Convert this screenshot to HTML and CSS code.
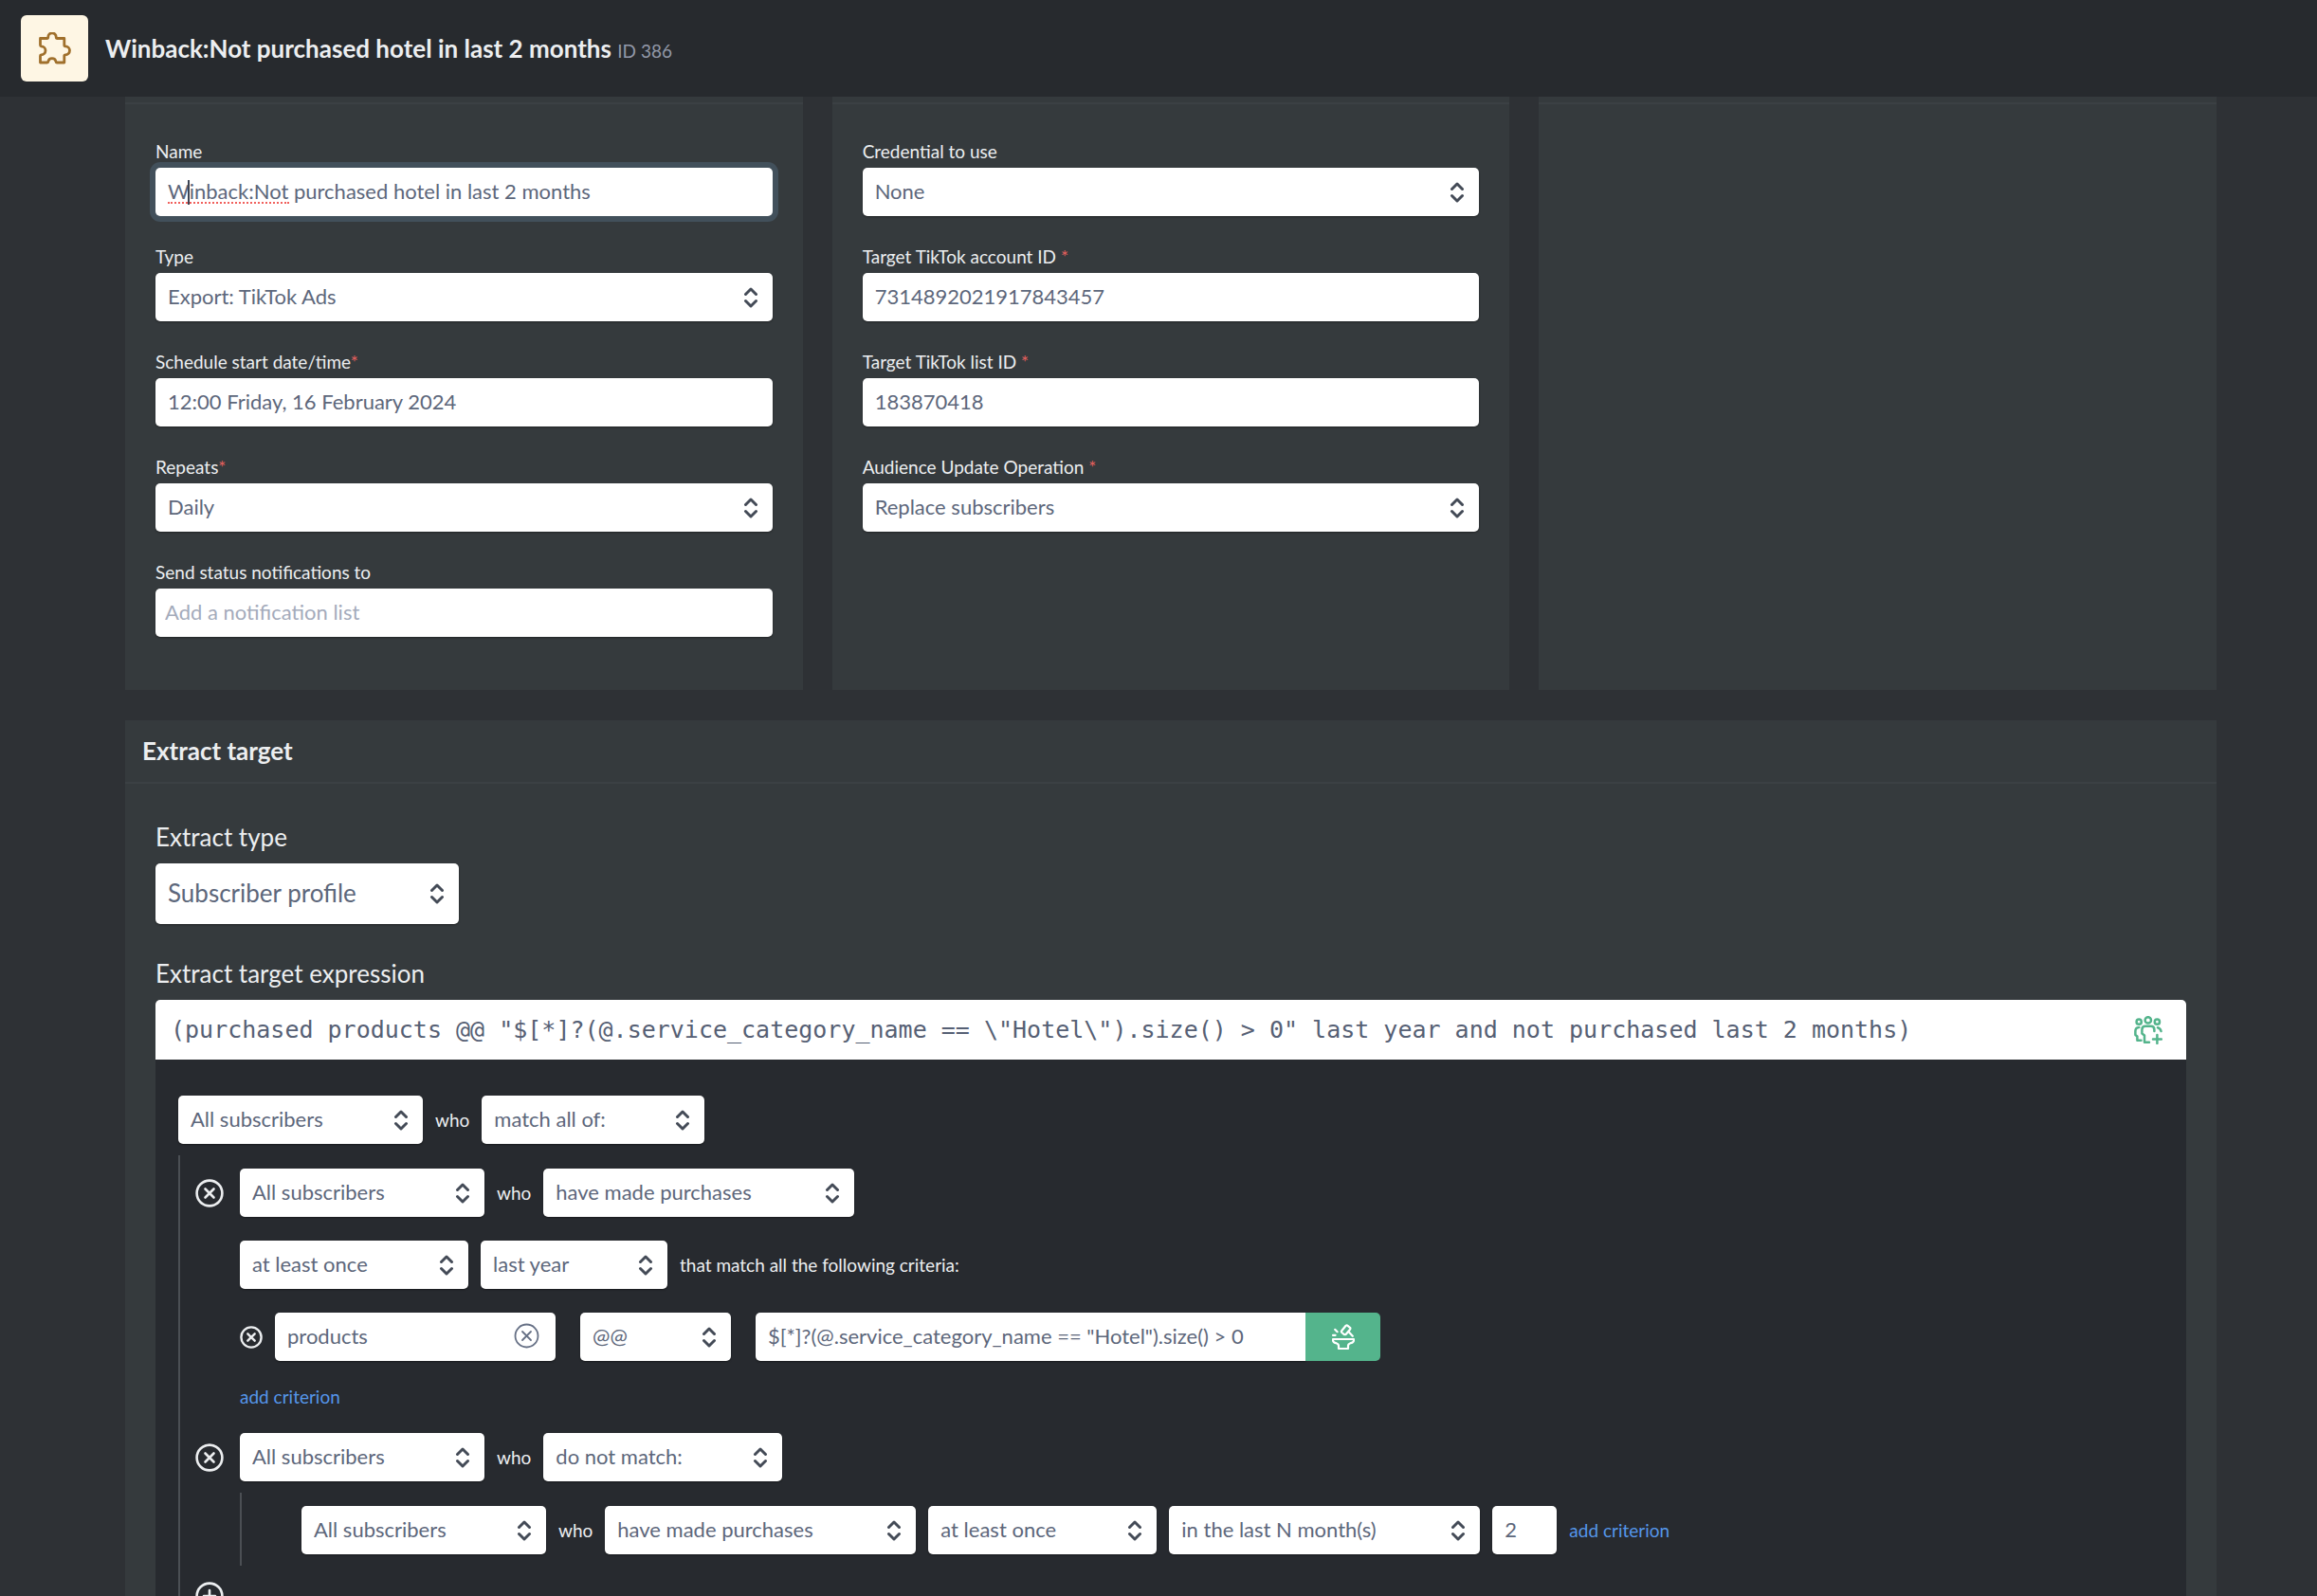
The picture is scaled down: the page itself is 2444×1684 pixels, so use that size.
FILE: index.html
```
<!DOCTYPE html>
<html lang="en">
<head>
    <meta charset="UTF-8">
    <meta name="viewport" content="width=device-width, initial-scale=1.0">
    <title>Winback:Not purchased hotel in last 2 months</title>
    <link rel="stylesheet" href="styles.css">
</head>
<body>
    <header class="topbar">
        <div class="topbar-icon">
            <svg width="34" height="34" viewBox="0 0 34 34" fill="none" stroke="#a0702c" stroke-width="2.8" stroke-linejoin="round">
                <path d="M1.5 6.5H8.5Q9.8 6.5 9.8 5a4.2 4.2 0 0 1 8.4 0Q18.2 6.5 19.5 6.5H26.8V13.5Q26.8 14.8 28 14.8a4.5 4.5 0 0 1 0 9Q26.8 23.8 26.8 25V32H19Q18 32 18 31a4.2 4.2 0 0 0-8.2 0Q9.8 32 8.8 32H1.5V25Q1.5 24 2.5 23.8a4.5 4.5 0 0 0 0-9Q1.5 14.6 1.5 13.5Z"/>
            </svg>
        </div>
        <h1>Winback:Not purchased hotel in last 2 months <small>ID 386</small></h1>
    </header>

    <main>
        <form class="content">
            <div class="cards">
                <section class="card">
                    <div class="card-edge"></div>
                    <div class="card-body">
                        <div class="field">
                            <label for="name">Name</label>
                            <div class="editing">
                                <input type="text" id="name" class="control focused" value="Winback:Not purchased hotel in last 2 months">
                                <span class="misspelt"></span>
                                <span class="caret"></span>
                            </div>
                        </div>
                        <div class="field">
                            <label for="type">Type</label>
                            <select id="type" class="control"><option>Export: TikTok Ads</option></select>
                        </div>
                        <div class="field">
                            <label for="start">Schedule start date/time<span class="required">*</span></label>
                            <input type="text" id="start" class="control" value="12:00 Friday, 16 February 2024">
                        </div>
                        <div class="field">
                            <label for="repeats">Repeats<span class="required">*</span></label>
                            <select id="repeats" class="control"><option>Daily</option></select>
                        </div>
                        <div class="field">
                            <label for="notify">Send status notifications to</label>
                            <input type="text" id="notify" class="control tags" placeholder="Add a notification list">
                        </div>
                    </div>
                </section>

                <section class="card">
                    <div class="card-edge"></div>
                    <div class="card-body">
                        <div class="field">
                            <label for="credential">Credential to use</label>
                            <select id="credential" class="control"><option>None</option></select>
                        </div>
                        <div class="field">
                            <label for="account">Target TikTok account ID <span class="required">*</span></label>
                            <input type="text" id="account" class="control" value="7314892021917843457">
                        </div>
                        <div class="field">
                            <label for="list">Target TikTok list ID <span class="required">*</span></label>
                            <input type="text" id="list" class="control" value="183870418">
                        </div>
                        <div class="field">
                            <label for="operation">Audience Update Operation <span class="required">*</span></label>
                            <select id="operation" class="control"><option>Replace subscribers</option></select>
                        </div>
                    </div>
                </section>

                <section class="card">
                    <div class="card-edge"></div>
                </section>
            </div>

            <section class="card">
                <h2>Extract target</h2>
                <div class="target-body">
                    <div class="field-lg">
                        <label for="extract-type">Extract type</label>
                        <select id="extract-type" class="control w-type"><option>Subscriber profile</option></select>
                    </div>
                    <div class="field-lg">
                        <label for="expression">Extract target expression</label>
                        <div class="expression">
                            <input type="text" id="expression" value="(purchased products @@ &quot;$[*]?(@.service_category_name == \&quot;Hotel\&quot;).size() &gt; 0&quot; last year and not purchased last 2 months)">
                            <button type="button" class="icon-button" aria-label="Add audience">
                                <svg width="30" height="30" viewBox="0 0 30 30" fill="none" stroke="#54b48c" stroke-width="2.5" stroke-linecap="round" stroke-linejoin="round">
                                    <circle cx="5.2" cy="6.2" r="2.6"/>
                                    <circle cx="14.8" cy="4.4" r="3.2"/>
                                    <circle cx="24.4" cy="6.2" r="2.6"/>
                                    <path d="M5.3 12Q1.4 12.4 1.4 16V20L3.4 21.5V25.8H7.5"/>
                                    <path d="M25 12.2Q27.8 13 28.5 16"/>
                                    <path d="M21.4 16V14.5Q21.4 10.8 17.8 10.8H12Q8.4 10.8 8.4 14.5V18.5L11 20.5V27.8H16"/>
                                    <path d="M24.4 20V29M20 24.5H29"/>
                                </svg>
                            </button>
                        </div>

                        <div class="builder">
                            <div class="row">
                                <select class="control w-who" aria-label="Audience"><option>All subscribers</option></select>
                                <span class="word">who</span>
                                <select class="control w-match" aria-label="Match"><option>match all of:</option></select>
                            </div>

                            <div class="group">
                                <div class="rule">
                                    <button type="button" class="icon-button remove" aria-label="Remove rule">
                                        <svg width="30" height="30" viewBox="0 0 30 30" fill="none" stroke="#eceef0" stroke-width="2.6" stroke-linecap="round">
                                            <circle cx="15" cy="15" r="13.4"/>
                                            <path d="M10.5 10.5L19.5 19.5M19.5 10.5L10.5 19.5"/>
                                        </svg>
                                    </button>
                                    <div class="rule-body">
                                        <div class="row">
                                            <select class="control w-who" aria-label="Audience"><option>All subscribers</option></select>
                                            <span class="word">who</span>
                                            <select class="control w-long" aria-label="Behaviour"><option>have made purchases</option></select>
                                        </div>
                                        <div class="row">
                                            <select class="control w-times" aria-label="Frequency"><option>at least once</option></select>
                                            <select class="control w-period" aria-label="Period"><option>last year</option></select>
                                            <span class="word">that match all the following criteria:</span>
                                        </div>
                                        <div class="row criterion">
                                            <div class="row">
                                                <button type="button" class="icon-button" aria-label="Remove criterion">
                                                    <svg width="24" height="24" viewBox="0 0 24 24" fill="none" stroke="#eceef0" stroke-width="2.4" stroke-linecap="round">
                                                        <circle cx="12" cy="12" r="10.6"/>
                                                        <path d="M8.3 8.3L15.7 15.7M15.7 8.3L8.3 15.7"/>
                                                    </svg>
                                                </button>
                                                <div class="control clearable">
                                                    <input type="text" aria-label="Property" value="products">
                                                    <button type="button" class="icon-button" aria-label="Clear">
                                                        <svg width="27" height="27" viewBox="0 0 27 27" fill="none" stroke="#667085" stroke-width="1.8" stroke-linecap="round">
                                                            <circle cx="13.5" cy="13.5" r="12"/>
                                                            <path d="M9 9L18 18M18 9L9 18"/>
                                                        </svg>
                                                    </button>
                                                </div>
                                            </div>
                                            <select class="control w-op" aria-label="Operator"><option>@@</option></select>
                                            <div class="value">
                                                <input type="text" class="control" aria-label="Value" value="$[*]?(@.service_category_name == &quot;Hotel&quot;).size() &gt; 0">
                                                <button type="button" class="mix" aria-label="Build value">
                                                    <svg width="24" height="28" viewBox="0 0 24 28" fill="none" stroke="#ffffff" stroke-width="2.2" stroke-linecap="round" stroke-linejoin="round">
                                                        <path d="M1 16H23V17.5Q22.5 20 19.5 20.2Q17 21 17 23V26H7V23Q7 21 4.5 20.2Q1.5 20 1 17.5Z"/>
                                                        <path d="M10 7.5L14.6 1.8Q15.6 1 16.6 1.8L19 3.8Q19.8 4.8 19 5.8L14.8 10.8Q13.6 11.6 12.6 10.8L10.4 9Q9.6 8.2 10 7.5Z"/>
                                                        <path d="M17.6 8.2L21.8 12.8M1 11.8H3.6M3.2 5.8L5.6 8.2"/>
                                                    </svg>
                                                </button>
                                            </div>
                                        </div>
                                        <a href="#" class="add">add criterion</a>
                                    </div>
                                </div>

                                <div class="rule">
                                    <button type="button" class="icon-button remove" aria-label="Remove rule">
                                        <svg width="30" height="30" viewBox="0 0 30 30" fill="none" stroke="#eceef0" stroke-width="2.6" stroke-linecap="round">
                                            <circle cx="15" cy="15" r="13.4"/>
                                            <path d="M10.5 10.5L19.5 19.5M19.5 10.5L10.5 19.5"/>
                                        </svg>
                                    </button>
                                    <div>
                                        <div class="row">
                                            <select class="control w-who" aria-label="Audience"><option>All subscribers</option></select>
                                            <span class="word">who</span>
                                            <select class="control w-not" aria-label="Match"><option>do not match:</option></select>
                                        </div>
                                        <div class="group nested">
                                            <div class="row">
                                                <select class="control w-who" aria-label="Audience"><option>All subscribers</option></select>
                                                <span class="word">who</span>
                                                <select class="control w-long" aria-label="Behaviour"><option>have made purchases</option></select>
                                                <select class="control w-times" aria-label="Frequency"><option>at least once</option></select>
                                                <select class="control w-long" aria-label="Period"><option>in the last N month(s)</option></select>
                                                <input type="text" class="control w-count" aria-label="Months" value="2">
                                                <a href="#" class="add">add criterion</a>
                                            </div>
                                        </div>
                                    </div>
                                </div>

                                <button type="button" class="icon-button add-rule" aria-label="Add rule">
                                    <svg width="30" height="30" viewBox="0 0 30 30" fill="none" stroke="#eceef0" stroke-width="2.6" stroke-linecap="round">
                                        <circle cx="15" cy="15" r="13.4"/>
                                        <path d="M15 9V21M9 15H21"/>
                                    </svg>
                                </button>
                            </div>
                        </div>
                    </div>
                </div>
            </section>
        </form>
    </main>
</body>
</html>
```
FILE: styles.css
```
* {
    margin: 0;
    padding: 0;
    box-sizing: border-box;
}

body {
    font-family: Lato, 'Liberation Sans', sans-serif;
    font-size: 22px;
    background: #2e3135;
    color: #eceef0;
    height: 100vh;
    display: flex;
    flex-direction: column;
}

input,
select,
button {
    font: inherit;
    border: none;
    outline: none;
}

.topbar {
    display: flex;
    align-items: center;
    gap: 18px;
    padding: 16px 22px;
    background: #272a2e;
}

.topbar-icon {
    display: flex;
    align-items: center;
    justify-content: center;
    width: 71px;
    height: 70px;
    border-radius: 6px;
    background: #fef6e4;
}

h1,
h2 {
    font-size: 26px;
    font-weight: 700;
}

h1 small {
    font-size: 19px;
    font-weight: 400;
    color: #9298a8;
}

main {
    flex: 1;
    min-height: 0;
    overflow: hidden;
}

.content {
    padding: 0 106px 0 132px;
}

.cards {
    display: grid;
    grid-template-columns: repeat(3, 1fr);
    gap: 31px;
    margin-bottom: 32px;
}

.card {
    background: #353a3d;
}

.card-edge {
    height: 8px;
    border-bottom: 2px solid #3b4044;
}

.card-body {
    display: flex;
    flex-direction: column;
    gap: 28px;
    padding: 35px 32px 56px;
}

.field label {
    display: block;
    font-size: 19px;
    line-height: 30px;
    margin-bottom: 2px;
}

.required {
    color: #e5605e;
}

.control {
    display: block;
    width: 100%;
    height: 51px;
    padding: 0 13px 2px;
    border-radius: 5px;
    background-color: #ffffff;
    color: #5d677b;
    box-shadow: 0 1px 2px rgba(0, 0, 0, 0.4);
}

select.control {
    appearance: none;
    background-image: url("data:image/svg+xml,%3Csvg xmlns='http://www.w3.org/2000/svg' width='16' height='22' viewBox='0 0 16 22' fill='none' stroke='%23444b57' stroke-width='3' stroke-linecap='round' stroke-linejoin='round'%3E%3Cpath d='M2.5 7.5L8 2L13.5 7.5M2.5 14.5L8 20L13.5 14.5'/%3E%3C/svg%3E");
    background-repeat: no-repeat;
    background-position: right 15px center;
}

.control.focused {
    box-shadow: 0 0 0 6px #42505b;
}

.control.tags {
    padding: 0 10px 2px;
}

.control::placeholder {
    color: #a4abbb;
}

.editing {
    position: relative;
}

/* spell-check mark and text cursor, drawn over the input */
.misspelt {
    position: absolute;
    left: 13px;
    bottom: 13px;
    width: 128px;
    border-bottom: 2px dotted #f0605c;
}

.caret {
    position: absolute;
    left: 34px;
    top: 13px;
    width: 2px;
    height: 26px;
    background: #3c4454;
}

h2 {
    padding: 0 18px;
    line-height: 65px;
    border-bottom: 2px solid #3b4044;
}

.target-body {
    display: flex;
    flex-direction: column;
    gap: 34px;
    padding: 38px 32px;
}

.field-lg {
    font-size: 26px;
}

.field-lg > label {
    display: block;
    line-height: 36px;
    margin-bottom: 10px;
}

.w-type {
    width: 320px;
    height: 64px;
}

.expression {
    display: flex;
    align-items: center;
    height: 63px;
    padding: 0 25px 0 16px;
    border-radius: 5px 5px 0 0;
    background: #ffffff;
}

.expression input {
    flex: 1;
    min-width: 0;
    background: none;
    color: #566074;
    font-family: 'DejaVu Sans Mono', monospace;
    font-size: 25px;
}

.icon-button {
    display: flex;
    background: none;
    cursor: pointer;
}

.builder {
    padding: 38px 24px;
    font-size: 22px;
    background: #272a2f;
}

.row {
    display: flex;
    align-items: center;
    gap: 13px;
}

.row .control {
    flex: none;
}

.word,
.add {
    font-size: 19px;
    line-height: 26px;
}

.word {
    min-width: 36px;
}

.add {
    color: #5596ea;
    text-decoration: none;
}

.w-who {
    width: 258px;
}

.w-match {
    width: 235px;
}

.w-not {
    width: 252px;
}

.w-long {
    width: 328px;
}

.w-times {
    width: 241px;
}

.w-period {
    width: 197px;
}

.w-op {
    width: 159px;
}

.w-count {
    width: 68px;
}

.group {
    display: flex;
    flex-direction: column;
    margin-top: 12px;
    padding: 14px 0 12px 16px;
    border-left: 2px solid #4b4f54;
}

.group.nested {
    padding-left: 63px;
}

.rule {
    display: flex;
    align-items: flex-start;
    gap: 17px;
}

.rule + .rule {
    margin-top: 25px;
}

.remove {
    height: 51px;
    align-items: center;
}

.rule-body {
    display: flex;
    flex-direction: column;
    gap: 25px;
}

.criterion {
    gap: 26px;
}

.clearable {
    display: flex;
    align-items: center;
    width: 296px;
    padding-right: 17px;
}

.clearable input {
    flex: 1;
    min-width: 0;
    background: none;
    color: inherit;
}

.value {
    display: flex;
}

.value .control {
    width: 580px;
    border-radius: 5px 0 0 5px;
}

.mix {
    display: flex;
    align-items: center;
    justify-content: center;
    width: 79px;
    height: 51px;
    border-radius: 0 5px 5px 0;
    background: #54b48c;
    cursor: pointer;
}

.add-rule {
    align-self: flex-start;
    margin-top: 17px;
}
```
